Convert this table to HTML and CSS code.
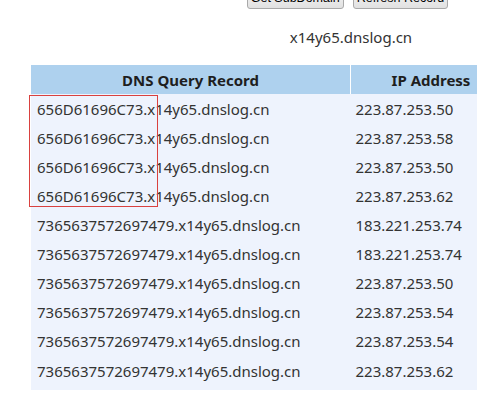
FILE: index.html
```html
<!DOCTYPE html>
<html>
<head>
<meta charset="utf-8">
<link rel="stylesheet" href="styles.css">
</head>
<body>
<div class="page">
  <div class="toolbar">
    <button class="btn">Get SubDomain</button>
    <button class="btn">Refresh Record</button>
  </div>
  <div class="domain">x14y65.dnslog.cn</div>
  <table class="records">
    <thead>
      <tr><th class="col-dns">DNS Query Record</th><th class="col-ip">IP Address</th></tr>
    </thead>
    <tbody>
      <tr><td>656D61696C73.x14y65.dnslog.cn</td><td>223.87.253.50</td></tr>
      <tr><td>656D61696C73.x14y65.dnslog.cn</td><td>223.87.253.58</td></tr>
      <tr><td>656D61696C73.x14y65.dnslog.cn</td><td>223.87.253.50</td></tr>
      <tr><td>656D61696C73.x14y65.dnslog.cn</td><td>223.87.253.62</td></tr>
      <tr><td>7365637572697479.x14y65.dnslog.cn</td><td>183.221.253.74</td></tr>
      <tr><td>7365637572697479.x14y65.dnslog.cn</td><td>183.221.253.74</td></tr>
      <tr><td>7365637572697479.x14y65.dnslog.cn</td><td>223.87.253.50</td></tr>
      <tr><td>7365637572697479.x14y65.dnslog.cn</td><td>223.87.253.54</td></tr>
      <tr><td>7365637572697479.x14y65.dnslog.cn</td><td>223.87.253.54</td></tr>
      <tr><td>7365637572697479.x14y65.dnslog.cn</td><td>223.87.253.62</td></tr>
    </tbody>
  </table>
  <div class="highlight"></div>
</div>
</body>
</html>
```

FILE: styles.css
```css
html, body {
  margin: 0;
  padding: 0;
  overflow: hidden;
  background: #ffffff;
}

.page {
  position: relative;
  display: flow-root;
  width: 702px;
  font-family: "Noto Sans", "Open Sans", sans-serif;
  font-size: 15px;
  color: #333333;
}

.toolbar {
  display: flex;
  justify-content: center;
  gap: 9px;
  margin-top: -13px;
  padding-right: 7px;
}

.btn {
  font-family: "Liberation Sans", Arial, sans-serif;
  font-size: 12.5px;
  color: #000000;
  height: 22px;
  padding: 0 3px;
  border: 1px solid #a9a9a9;
  border-radius: 3px;
  background: linear-gradient(#f7f7f7, #e1e1e1);
}

.domain {
  text-align: center;
  margin-top: 18px;
  line-height: 20px;
  height: 20px;
}

.records {
  margin-top: 18px;
  margin-left: 31px;
  width: 480px;
  border-collapse: collapse;
  table-layout: fixed;
  background: #eef3fd;
}

.records th {
  height: 29px;
  padding: 0;
  background: #aed1ee;
  color: #1e1e1e;
  font-weight: bold;
  text-align: center;
}

.records .col-dns {
  width: 319px;
  border-right: 1px solid #ffffff;
}

.records td {
  height: 29px;
  padding: 0 0 0 6px;
  white-space: nowrap;
  line-height: 20px;
}

.records td + td {
  padding-left: 5px;
}

.records tbody tr:last-child td {
  height: 32px;
  padding-bottom: 3px;
}

.highlight {
  position: absolute;
  left: 29px;
  top: 95px;
  width: 127px;
  height: 110px;
  border: 1px solid #d9413f;
}
```
